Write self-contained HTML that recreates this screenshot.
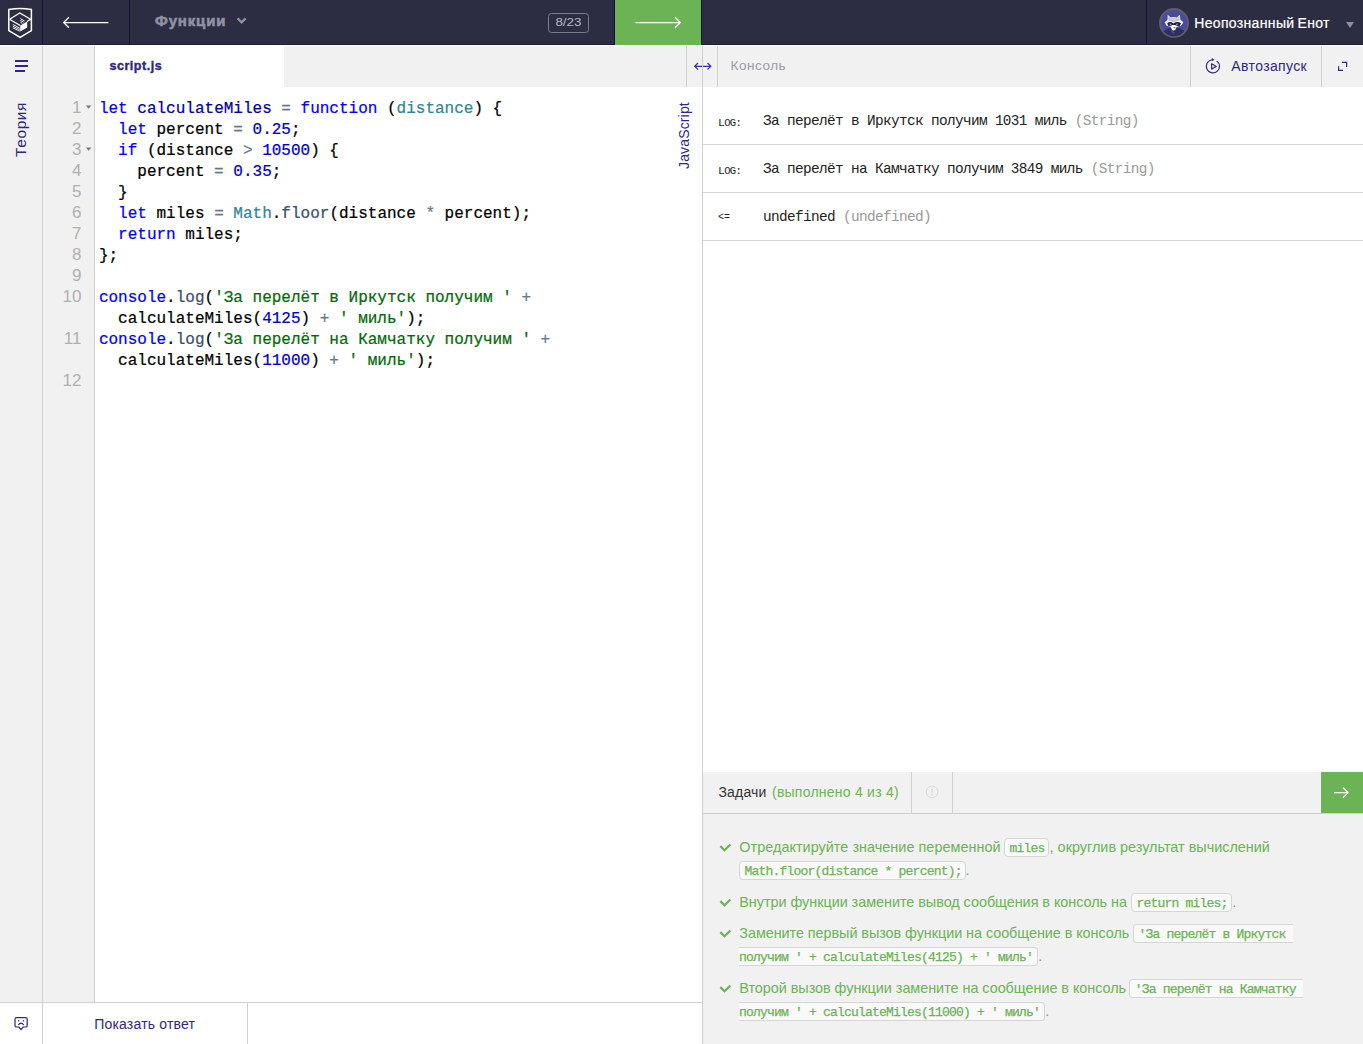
<!DOCTYPE html>
<html lang="ru">
<head>
<meta charset="utf-8">
<title>Функции</title>
<style>
*{box-sizing:border-box;margin:0;padding:0}
html,body{width:1363px;height:1044px;overflow:hidden;background:#fff;font-family:"Liberation Sans",sans-serif;}
body{position:relative}
.abs{position:absolute}
/* header */
#hdr{position:absolute;left:0;top:0;width:1363px;height:45px;background:#2c2d42;border-bottom:1px solid #1e1f35}
#hdr .vd{position:absolute;top:0;width:1px;height:45px;background:#14143a}
#title{position:absolute;left:155px;top:10.6px;font-size:15px;font-weight:bold;color:#9091a3;-webkit-text-stroke:0.6px #9091a3;letter-spacing:0.85px;line-height:20px;white-space:nowrap}
#badge{position:absolute;left:548px;top:13px;width:41px;height:20px;border:1px solid #7b7c8c;border-radius:3.5px;color:#b6b7c3;font-size:11.8px;line-height:17.4px;text-align:center}
#badge span{display:inline-block;transform:scaleX(1.14)}
#next{position:absolute;left:615px;top:0;width:86px;height:45px;background:#6bb354}
#uname{position:absolute;left:1194.2px;top:13.3px;font-size:14px;letter-spacing:0.34px;word-spacing:-1.2px;-webkit-text-stroke:0.2px #fff;color:#fff;line-height:20px;white-space:nowrap}
/* sidebar */
#side{position:absolute;left:0;top:45px;width:43px;height:957px;background:#f1f1f1;border-right:1px solid #cfcfcf}
#theory{position:absolute;left:11.8px;top:111.6px;transform-origin:0 0;transform:rotate(-90deg);color:#302683;font-size:15.5px;letter-spacing:0.6px;white-space:nowrap;line-height:18px}
/* tabs */
#tabs{position:absolute;left:43px;top:45px;width:660px;height:42px;background:#f1f1f1}
#tab{position:absolute;left:95px;top:45px;width:189px;height:42px;background:#fff}
#tab span{position:absolute;left:14.5px;top:10.5px;color:#302683;font-weight:bold;font-size:12.5px;letter-spacing:0.53px;-webkit-text-stroke:0.4px #302683;line-height:20px;white-space:nowrap}
/* editor */
#gutter{position:absolute;left:43px;top:45px;width:52px;height:957px;background:#f1f1f1;border-right:1px solid #cfcfcf}
#code{position:absolute;left:98.9px;top:99px;font-family:"Liberation Mono",monospace;font-size:16px;line-height:21px;white-space:pre;color:#000;-webkit-text-stroke:0.22px}
#nums{position:absolute;left:43px;top:97px;width:38.5px;text-align:right;font-family:"Liberation Sans",sans-serif;font-size:17px;line-height:21px;color:#b0b0b0;white-space:pre}
.k{color:#0000ff}.n{color:#0000cd}.o{color:#687687}.v{color:#318495}.f{color:#0000a2}.s{color:#036a07}.sf{color:#3c4c72}
#jslabel{position:absolute;left:676.4px;top:169.2px;transform:rotate(-90deg);color:#302683;font-size:14px;letter-spacing:0.15px;white-space:nowrap;line-height:16px;transform-origin:0 0}
.fold{position:absolute;left:86px;width:0;height:0;border-left:2.5px solid transparent;border-right:2.5px solid transparent;border-top:3px solid #777}
/* bottom bar */
#bot{position:absolute;left:0;top:1002px;width:703px;height:42px;background:#fff;border-top:1px solid #d0d0d0}
#bot .vd{position:absolute;top:0;width:1px;height:42px;background:#d0d0d0}
#show{position:absolute;left:94.2px;top:10.6px;font-size:14px;letter-spacing:0.19px;color:#302683;line-height:20px;white-space:nowrap}
/* right */
#vsplit{position:absolute;left:702px;top:45px;width:1px;height:999px;background:#cfcfcf}
#chdr{position:absolute;left:703px;top:45px;width:660px;height:42px;background:#f1f1f1}
#chdr .vd,#handle .vd{position:absolute;top:0;width:1px;height:42px;background:#cfcfcf}
#handle{position:absolute;left:686px;top:45px;width:32px;height:42px;background:#f1f1f1}
#ctitle{position:absolute;left:27.5px;top:11px;font-size:13.5px;letter-spacing:0.55px;color:#9a9bab;line-height:20px;white-space:nowrap}
#auto{position:absolute;left:528.3px;top:10.5px;font-size:14px;letter-spacing:0.37px;color:#302683;line-height:20px;white-space:nowrap}
.crow{position:absolute;left:703px;width:660px;height:48px;border-bottom:1px solid #d4d4d4;font-family:"Liberation Mono",monospace;font-size:14.4px;letter-spacing:-0.64px;line-height:20px;color:#222;white-space:pre}
.crow .lbl{position:absolute;left:15px;top:16px;font-size:11.4px;letter-spacing:-0.7px}
.crow .lbl small{font-size:10.6px}
.crow .lbl.ar{letter-spacing:0;font-size:10px;top:15px}
.crow .msg{position:absolute;left:60px;top:14px}
.crow .t{color:#999}
/* tasks */
#thdr{position:absolute;left:703px;top:772px;width:660px;height:42px;background:#f1f1f1;border-bottom:1px solid #d0d0d0}
#thdr .vd{position:absolute;top:0;width:1px;height:41px;background:#d0d0d0}
#ttitle{position:absolute;left:15.4px;top:10.1px;font-size:14px;letter-spacing:0.2px;color:#333;line-height:20px;white-space:pre}
#ttitle span{color:#6bb354;letter-spacing:0.24px;position:absolute;left:53.6px;top:0}
#tgo{position:absolute;left:618px;top:0;width:42px;height:41px;background:#6bb354}
#tbody{position:absolute;left:703px;top:814px;width:660px;height:230px;background:#f1f1f1}
.tt{position:absolute;color:#6bb354;font-size:14.4px;line-height:23px;white-space:pre}
.chip{position:absolute;height:19px;font-family:"Liberation Mono",monospace;font-size:13px;letter-spacing:-0.8px;line-height:19px;-webkit-text-stroke:0.25px #6bb354;color:#6bb354;background:#f9f9f9;border:1px solid #d6d6d6;border-radius:4px;padding:0 3.4px 0 4.3px;white-space:pre}
.chip.or{border-right:none;border-radius:4px 0 0 4px;padding-right:0}
.chip.ol{border-left:none;border-radius:0 4px 4px 0;padding-left:0;padding-right:4.2px}
.chk{position:absolute;left:16px}
</style>
</head>
<body>
<div id="hdr">
  <div class="vd" style="left:42px"></div>
  <div class="vd" style="left:129px"></div>
  <div class="vd" style="left:1146px"></div>
  <div class="vd" style="left:614px"></div>
  <div class="vd" style="left:701px"></div>
  <svg class="abs" style="left:0;top:0" width="42" height="45" viewBox="0 0 42 45"><g fill="none" stroke="#fff" stroke-linejoin="miter">
<path d="M8.8 9.6 Q20.2 7.4 31.4 9.6 L31.4 30.6 L20.1 37.4 L8.8 30.6 Z" stroke-width="1.5"/>
<path d="M9.6 19.2 L19.8 13 L30.6 19.2 L27 21.4 M9.6 19.2 L20.2 25.6" stroke-width="1.2"/>
<path d="M12.8 24.4 L19.8 28.2 M12.8 26.1 L19.8 29.9 M12.8 27.8 L19.8 31.2" stroke-width="0.9"/>
<path d="M20.4 18.6 L24.6 21 M20.4 20.4 L23.6 22.2 M20.4 22.2 L22.4 23.4" stroke-width="0.9"/>
</g><path d="M20.2 25.6 L27.2 21.6 L27.2 27.4 L20.2 31.4 Z" fill="#fff"/></svg>
<svg class="abs" style="left:58px;top:14px" width="56" height="18" viewBox="0 0 56 18"><path d="M50.4 8.5 H5.6 M11 3.3 L5.6 8.5 L11 13.7" fill="none" stroke="#fff" stroke-width="1.25"/></svg>
<svg class="abs" style="left:235px;top:15.2px" width="14" height="12" viewBox="0 0 14 12"><path d="M2.6 3.4 L6.6 7.4 L10.6 3.4" fill="none" stroke="#9091a3" stroke-width="2.2"/></svg>
<svg class="abs" style="left:1159px;top:8px" width="30" height="30" viewBox="0 0 30 30">
<defs><clipPath id="avc"><circle cx="15" cy="15" r="13.2"/></clipPath></defs>
<circle cx="15" cy="15" r="14" fill="#4b4b9c" stroke="#5d5e70" stroke-width="2"/>
<g clip-path="url(#avc)">
<path d="M3 30 L3 24.5 Q6 21.6 10.4 20 L14.6 21.6 L19.4 19.8 Q24 21.4 27 24.5 L27 30 Z" fill="#2d2e5c"/>
<path d="M12.6 21.4 L15.6 27.6 L11.8 23.6 Z" fill="#4b4b9c"/>
<path d="M14.9 22.6 L15.5 25 L14.6 24.8 Z" fill="#8a8a55"/>
<path d="M8.7 6.8 L11.6 9.6 Q14.8 8.6 18 9.6 L20.8 6.8 L21.4 11.8 L24.3 14.2 L22.3 17.6 L17.6 19 L15.8 22.3 L13.3 22.3 L12 19 L7.3 17.6 L5.7 14.2 L8.5 11.8 Z" fill="#f2f2f5"/>
<path d="M9.4 8 L11.7 10.2 Q14.8 9.2 17.9 10.2 L20.2 8 L20.6 12.4 L17.6 13.2 L14.8 14.6 L12 13.2 L9 12.4 Z" fill="#c6c7d1"/>
<path d="M8.2 15.2 Q11 12.6 14.6 15.4 Q18.4 12.6 22 15.2 L20.6 18 Q17.6 18.2 15.8 17 L13.6 17 Q11.6 18.2 9.4 18 Z" fill="#1b1b45"/>
<path d="M10.6 15.6 L12.6 16 L12.4 16.7 L10.6 16.5 Z M18.8 15.6 L16.8 16 L17 16.7 L18.8 16.5 Z" fill="#d5d6df"/>
<ellipse cx="14.6" cy="19.7" rx="2.2" ry="2.6" fill="#fff"/>
<ellipse cx="15.6" cy="19.8" rx="1.1" ry="0.7" fill="#7d7e9c"/>
</g></svg>
<div class="abs" style="left:1346px;top:22px;width:0;height:0;border-left:4px solid transparent;border-right:4px solid transparent;border-top:6px solid #8c8d9e"></div>
  <div id="title">Функции</div>
  <div id="badge"><span>8/23</span></div>
  <div id="next"><svg class="abs" style="left:15px;top:14px" width="56" height="18" viewBox="0 0 56 18"><path d="M5.6 8.5 H50.4 M45 3.3 L50.4 8.5 L45 13.7" fill="none" stroke="#fff" stroke-width="1.25"/></svg></div>
  <div id="uname">Неопознанный Енот</div>
</div>
<div id="side"><div class="abs" style="left:15px;top:15px;width:13px;height:2px;background:#302683"></div><div class="abs" style="left:15px;top:20px;width:13px;height:2px;background:#302683"></div><div class="abs" style="left:15px;top:25px;width:10px;height:2px;background:#302683"></div><div id="theory">Теория</div></div>
<div id="tabs"></div>
<div id="gutter"></div>
<div id="tab"><span>script.js</span></div>
<div id="nums">1
2
3
4
5
6
7
8
9
10

11

12</div>
<div id="code"><span class="k">let</span> <span class="f">calculateMiles</span> <span class="o">=</span> <span class="k">function</span> (<span class="v">distance</span>) {
  <span class="k">let</span> percent <span class="o">=</span> <span class="n">0.25</span>;
  <span class="k">if</span> (distance <span class="o">&gt;</span> <span class="n">10500</span>) {
    percent <span class="o">=</span> <span class="n">0.35</span>;
  }
  <span class="k">let</span> miles <span class="o">=</span> <span class="v">Math</span>.<span class="sf">floor</span>(distance <span class="o">*</span> percent);
  <span class="k">return</span> miles;
};

<span class="k">console</span>.<span class="sf">log</span>(<span class="s">'За перелёт в Иркутск получим '</span> <span class="o">+</span>
  calculateMiles(<span class="n">4125</span>) <span class="o">+</span> <span class="s">' миль'</span>);
<span class="k">console</span>.<span class="sf">log</span>(<span class="s">'За перелёт на Камчатку получим '</span> <span class="o">+</span>
  calculateMiles(<span class="n">11000</span>) <span class="o">+</span> <span class="s">' миль'</span>);
</div>
<svg class="abs" style="left:85px;top:104px" width="8" height="6" viewBox="0 0 8 6"><path d="M0.9 1.5 H6.3 L3.6 4.7 Z" fill="#777"/></svg><svg class="abs" style="left:85px;top:146px" width="8" height="6" viewBox="0 0 8 6"><path d="M0.9 1.5 H6.3 L3.6 4.7 Z" fill="#777"/></svg>
<div id="jslabel">JavaScript</div>
<div id="bot">
  <div class="vd" style="left:42px"></div>
  <div class="vd" style="left:247px"></div>
  <svg class="abs" style="left:13px;top:12.2px" width="17" height="17" viewBox="0 0 17 17"><path d="M3.6 2.6 H12.6 Q14.2 2.6 14.2 4.2 V10.4 Q14.2 12 12.6 12 H10.2 L8 14.6 L5.8 12 H3.6 Q2 12 2 10.4 V4.2 Q2 2.6 3.6 2.6 Z" fill="none" stroke="#302683" stroke-width="1.2" stroke-linejoin="round"/><circle cx="5.7" cy="5.8" r="0.8" fill="#302683"/><circle cx="10.4" cy="5.8" r="0.8" fill="#302683"/><path d="M5.3 10 Q8 6.4 10.8 10" fill="none" stroke="#302683" stroke-width="1.2"/></svg><div id="show">Показать ответ</div>
</div>
<div id="chdr">
  <div id="ctitle">Консоль</div>
  <div class="vd" style="left:487px"></div>
  <div class="vd" style="left:618px"></div>
  <svg class="abs" style="left:501px;top:11px" width="18" height="19" viewBox="0 0 18 19"><g fill="none" stroke="#302683" stroke-width="1.2"><path d="M12.75 4.9 A6.6 6.6 0 1 1 8.0 3.75"/><path d="M7.7 7.7 L12.3 10.4 L7.7 13.1 Z" stroke-linejoin="round"/></g><path d="M7.9 2.1 L10.5 3.7 L7.9 5.2 Z" fill="#302683"/></svg><svg class="abs" style="left:633px;top:15px" width="14" height="13" viewBox="0 0 14 13"><path d="M5.9 2.4 H10.6 V6.9 M2.6 6.2 V10.4 H7" fill="none" stroke="#302683" stroke-width="1.2"/></svg><div id="auto">Автозапуск</div>
</div>
<div id="handle"><svg class="abs" style="left:6px;top:15px" width="20" height="12" viewBox="0 0 20 12"><path d="M2.8 6.3 H18.7 M6 3 L2.7 6.3 L6 9.6 M15.5 3 L18.8 6.3 L15.5 9.6" fill="none" stroke="#3734a0" stroke-width="1.25"/></svg><div class="vd" style="left:0"></div><div class="vd" style="left:31px"></div></div>
<div id="vsplit"></div>
<div class="abs" style="left:0;top:45px;width:1363px;height:1px;background:#fff"></div>
<div class="crow" style="top:97px"><span class="lbl">L<small>OG:</small></span><span class="msg">За перелёт в Иркутск получим 1031 миль <span class="t">(String)</span></span></div>
<div class="crow" style="top:145px"><span class="lbl">L<small>OG:</small></span><span class="msg">За перелёт на Камчатку получим 3849 миль <span class="t">(String)</span></span></div>
<div class="crow" style="top:193px"><span class="lbl ar">&lt;=</span><span class="msg">undefined <span class="t">(undefined)</span></span></div>
<div id="thdr">
  <div id="ttitle">Задачи<span>(выполнено 4 из 4)</span></div>
  <div class="vd" style="left:208px"></div>
  <div class="vd" style="left:249px"></div>
  <svg class="abs" style="left:222px;top:13px" width="14" height="14" viewBox="0 0 14 14"><circle cx="7.1" cy="6.9" r="5.8" fill="none" stroke="#d9d9d9" stroke-width="1"/><path d="M7.1 3.7 V7.8 M7.1 9 V10.5" stroke="#d9d9d9" stroke-width="1.5" fill="none"/></svg><div id="tgo"><svg class="abs" style="left:10px;top:13px" width="22" height="15" viewBox="0 0 22 15"><path d="M3.1 7.6 H17 M12 2.6 L17.1 7.6 L12 12.6" fill="none" stroke="#fff" stroke-width="1.2"/></svg></div>
</div>
<div id="tbody">
<svg class="chk" style="top:29px" width="13" height="10" viewBox="0 0 13 10"><path d="M1.3 3.1 L5.5 7.2 L11.4 1.5" fill="none" stroke="#6bb354" stroke-width="2.2"/></svg>
<span class="tt" style="left:36.3px;top:22px;letter-spacing:0.043px">Отредактируйте значение переменной</span>
<span class="chip " style="left:301.3px;top:24px">miles</span>
<span class="tt" style="left:346.6px;top:22px;letter-spacing:0.011px">, округлив результат вычислений</span>
<span class="chip " style="left:36.3px;top:47px">Math.floor(distance * percent);</span>
<span class="tt" style="left:262.6px;top:45px;letter-spacing:-0.998px">.</span>
<svg class="chk" style="top:84px" width="13" height="10" viewBox="0 0 13 10"><path d="M1.3 3.1 L5.5 7.2 L11.4 1.5" fill="none" stroke="#6bb354" stroke-width="2.2"/></svg>
<span class="tt" style="left:36.3px;top:77px;letter-spacing:-0.032px">Внутри функции замените вывод сообщения в консоль на</span>
<span class="chip " style="left:428.2px;top:79px">return miles;</span>
<span class="tt" style="left:529.2px;top:77px;letter-spacing:-0.998px">.</span>
<svg class="chk" style="top:115px" width="13" height="10" viewBox="0 0 13 10"><path d="M1.3 3.1 L5.5 7.2 L11.4 1.5" fill="none" stroke="#6bb354" stroke-width="2.2"/></svg>
<span class="tt" style="left:36.3px;top:108px;letter-spacing:-0.051px">Замените первый вызов функции на сообщение в консоль</span>
<span class="chip or" style="left:430.3px;top:110px">'За перелёт в Иркутск </span>
<span class="chip ol" style="left:36.0px;top:133px">получим ' + calculateMiles(4125) + ' миль'</span>
<span class="tt" style="left:335.3px;top:131px;letter-spacing:-0.998px">.</span>
<svg class="chk" style="top:170px" width="13" height="10" viewBox="0 0 13 10"><path d="M1.3 3.1 L5.5 7.2 L11.4 1.5" fill="none" stroke="#6bb354" stroke-width="2.2"/></svg>
<span class="tt" style="left:36.3px;top:163px;letter-spacing:-0.028px">Второй вызов функции замените на сообщение в консоль</span>
<span class="chip or" style="left:426.4px;top:165px">'За перелёт на Камчатку </span>
<span class="chip ol" style="left:36.0px;top:188px">получим ' + calculateMiles(11000) + ' миль'</span>
<span class="tt" style="left:342.3px;top:186px;letter-spacing:-0.998px">.</span>
</div><!--tb-->
</body>
</html>
